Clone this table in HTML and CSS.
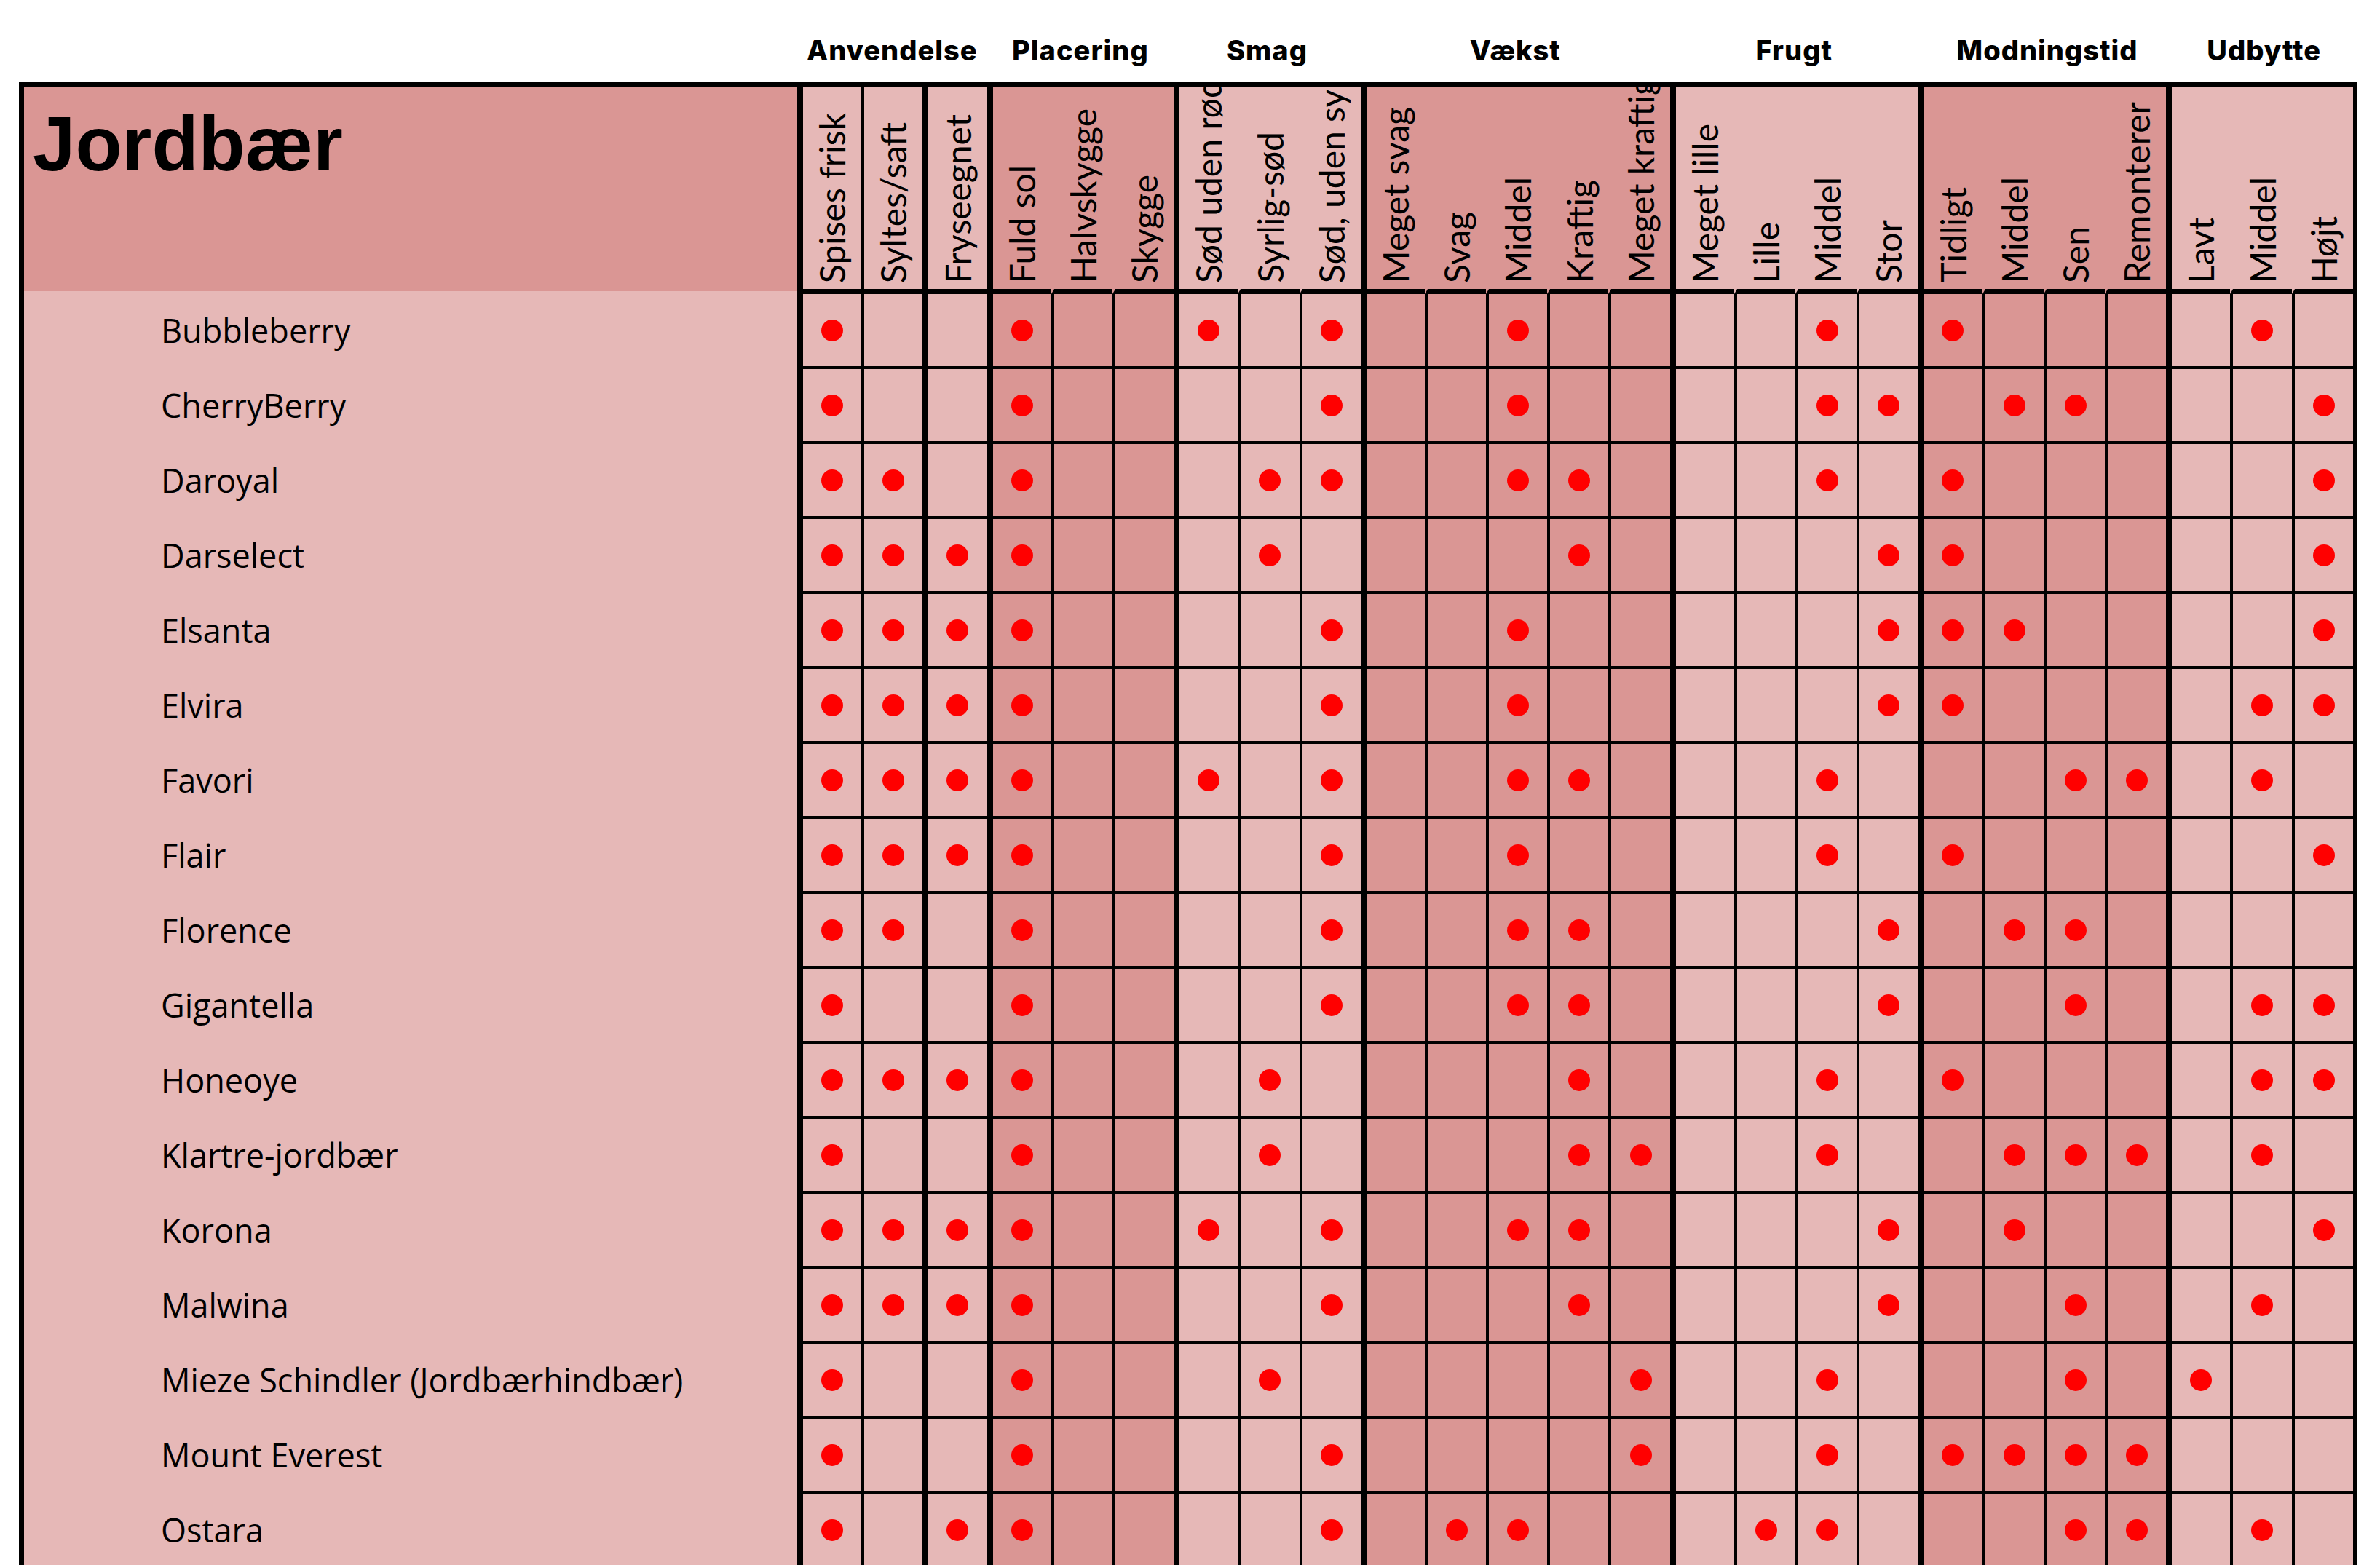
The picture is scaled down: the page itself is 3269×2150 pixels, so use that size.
FILE: index.html
```html
<!DOCTYPE html>
<html lang="da">
<head>
<meta charset="utf-8">
<title>Jordbær</title>
<link rel="stylesheet" href="styles.css">
</head>
<body>
<div class="page">
  <div class="groups">
    <div class="gspacer"></div>
    <div class="g g3a">Anvendelse</div>
    <div class="g g3">Placering</div>
    <div class="g g3">Smag</div>
    <div class="g g5">Vækst</div>
    <div class="g g4">Frugt</div>
    <div class="g g4 gm">Modningstid</div>
    <div class="g g3 gu">Udbytte</div>
  </div>
  <div class="sheet">
    <div class="hrow">
      <div class="title">Jordbær</div>
      <span><em>Spises frisk</em></span>
      <span><em>Syltes/saft</em></span>
      <span><em>Fryseegnet</em></span>
      <span><em>Fuld sol</em></span>
      <span><em>Halvskygge</em></span>
      <span><em>Skygge</em></span>
      <span><em>Sød uden rødt</em></span>
      <span><em>Syrlig-sød</em></span>
      <span><em>Sød, uden syre</em></span>
      <span><em>Meget svag</em></span>
      <span><em>Svag</em></span>
      <span><em>Middel</em></span>
      <span><em>Kraftig</em></span>
      <span><em>Meget kraftig</em></span>
      <span><em>Meget lille</em></span>
      <span><em>Lille</em></span>
      <span><em>Middel</em></span>
      <span><em>Stor</em></span>
      <span><em>Tidligt</em></span>
      <span><em>Middel</em></span>
      <span><em>Sen</em></span>
      <span><em>Remonterer</em></span>
      <span><em>Lavt</em></span>
      <span><em>Middel</em></span>
      <span><em>Højt</em></span>
    </div>
    <div class="row"><div class="name">Bubbleberry</div><span class="d"></span><span></span><span></span><span class="d"></span><span></span><span></span><span class="d"></span><span></span><span class="d"></span><span></span><span></span><span class="d"></span><span></span><span></span><span></span><span></span><span class="d"></span><span></span><span class="d"></span><span></span><span></span><span></span><span></span><span class="d"></span><span></span></div>
    <div class="row"><div class="name">CherryBerry</div><span class="d"></span><span></span><span></span><span class="d"></span><span></span><span></span><span></span><span></span><span class="d"></span><span></span><span></span><span class="d"></span><span></span><span></span><span></span><span></span><span class="d"></span><span class="d"></span><span></span><span class="d"></span><span class="d"></span><span></span><span></span><span></span><span class="d"></span></div>
    <div class="row"><div class="name">Daroyal</div><span class="d"></span><span class="d"></span><span></span><span class="d"></span><span></span><span></span><span></span><span class="d"></span><span class="d"></span><span></span><span></span><span class="d"></span><span class="d"></span><span></span><span></span><span></span><span class="d"></span><span></span><span class="d"></span><span></span><span></span><span></span><span></span><span></span><span class="d"></span></div>
    <div class="row"><div class="name">Darselect</div><span class="d"></span><span class="d"></span><span class="d"></span><span class="d"></span><span></span><span></span><span></span><span class="d"></span><span></span><span></span><span></span><span></span><span class="d"></span><span></span><span></span><span></span><span></span><span class="d"></span><span class="d"></span><span></span><span></span><span></span><span></span><span></span><span class="d"></span></div>
    <div class="row"><div class="name">Elsanta</div><span class="d"></span><span class="d"></span><span class="d"></span><span class="d"></span><span></span><span></span><span></span><span></span><span class="d"></span><span></span><span></span><span class="d"></span><span></span><span></span><span></span><span></span><span></span><span class="d"></span><span class="d"></span><span class="d"></span><span></span><span></span><span></span><span></span><span class="d"></span></div>
    <div class="row"><div class="name">Elvira</div><span class="d"></span><span class="d"></span><span class="d"></span><span class="d"></span><span></span><span></span><span></span><span></span><span class="d"></span><span></span><span></span><span class="d"></span><span></span><span></span><span></span><span></span><span></span><span class="d"></span><span class="d"></span><span></span><span></span><span></span><span></span><span class="d"></span><span class="d"></span></div>
    <div class="row"><div class="name">Favori</div><span class="d"></span><span class="d"></span><span class="d"></span><span class="d"></span><span></span><span></span><span class="d"></span><span></span><span class="d"></span><span></span><span></span><span class="d"></span><span class="d"></span><span></span><span></span><span></span><span class="d"></span><span></span><span></span><span></span><span class="d"></span><span class="d"></span><span></span><span class="d"></span><span></span></div>
    <div class="row"><div class="name">Flair</div><span class="d"></span><span class="d"></span><span class="d"></span><span class="d"></span><span></span><span></span><span></span><span></span><span class="d"></span><span></span><span></span><span class="d"></span><span></span><span></span><span></span><span></span><span class="d"></span><span></span><span class="d"></span><span></span><span></span><span></span><span></span><span></span><span class="d"></span></div>
    <div class="row"><div class="name">Florence</div><span class="d"></span><span class="d"></span><span></span><span class="d"></span><span></span><span></span><span></span><span></span><span class="d"></span><span></span><span></span><span class="d"></span><span class="d"></span><span></span><span></span><span></span><span></span><span class="d"></span><span></span><span class="d"></span><span class="d"></span><span></span><span></span><span></span><span></span></div>
    <div class="row"><div class="name">Gigantella</div><span class="d"></span><span></span><span></span><span class="d"></span><span></span><span></span><span></span><span></span><span class="d"></span><span></span><span></span><span class="d"></span><span class="d"></span><span></span><span></span><span></span><span></span><span class="d"></span><span></span><span></span><span class="d"></span><span></span><span></span><span class="d"></span><span class="d"></span></div>
    <div class="row"><div class="name">Honeoye</div><span class="d"></span><span class="d"></span><span class="d"></span><span class="d"></span><span></span><span></span><span></span><span class="d"></span><span></span><span></span><span></span><span></span><span class="d"></span><span></span><span></span><span></span><span class="d"></span><span></span><span class="d"></span><span></span><span></span><span></span><span></span><span class="d"></span><span class="d"></span></div>
    <div class="row"><div class="name">Klartre-jordbær</div><span class="d"></span><span></span><span></span><span class="d"></span><span></span><span></span><span></span><span class="d"></span><span></span><span></span><span></span><span></span><span class="d"></span><span class="d"></span><span></span><span></span><span class="d"></span><span></span><span></span><span class="d"></span><span class="d"></span><span class="d"></span><span></span><span class="d"></span><span></span></div>
    <div class="row"><div class="name">Korona</div><span class="d"></span><span class="d"></span><span class="d"></span><span class="d"></span><span></span><span></span><span class="d"></span><span></span><span class="d"></span><span></span><span></span><span class="d"></span><span class="d"></span><span></span><span></span><span></span><span></span><span class="d"></span><span></span><span class="d"></span><span></span><span></span><span></span><span></span><span class="d"></span></div>
    <div class="row"><div class="name">Malwina</div><span class="d"></span><span class="d"></span><span class="d"></span><span class="d"></span><span></span><span></span><span></span><span></span><span class="d"></span><span></span><span></span><span></span><span class="d"></span><span></span><span></span><span></span><span></span><span class="d"></span><span></span><span></span><span class="d"></span><span></span><span></span><span class="d"></span><span></span></div>
    <div class="row"><div class="name">Mieze Schindler (Jordbærhindbær)</div><span class="d"></span><span></span><span></span><span class="d"></span><span></span><span></span><span></span><span class="d"></span><span></span><span></span><span></span><span></span><span></span><span class="d"></span><span></span><span></span><span class="d"></span><span></span><span></span><span></span><span class="d"></span><span></span><span class="d"></span><span></span><span></span></div>
    <div class="row"><div class="name">Mount Everest</div><span class="d"></span><span></span><span></span><span class="d"></span><span></span><span></span><span></span><span></span><span class="d"></span><span></span><span></span><span></span><span></span><span class="d"></span><span></span><span></span><span class="d"></span><span></span><span class="d"></span><span class="d"></span><span class="d"></span><span class="d"></span><span></span><span></span><span></span></div>
    <div class="row"><div class="name">Ostara</div><span class="d"></span><span></span><span class="d"></span><span class="d"></span><span></span><span></span><span></span><span></span><span class="d"></span><span></span><span class="d"></span><span class="d"></span><span></span><span></span><span></span><span class="d"></span><span class="d"></span><span></span><span></span><span></span><span class="d"></span><span class="d"></span><span></span><span class="d"></span><span></span></div>
  </div>
</div>
</body>
</html>
```
FILE: styles.css
```css
html, body {
  margin: 0;
  padding: 0;
  background: #ffffff;
}

.page {
  padding-left: 26px;
  width: 3243px;
}

/* group labels above the sheet */
.groups {
  display: flex;
  height: 112px;
  box-sizing: border-box;
  padding-top: 46px;
}
.gspacer {
  width: 1069px;
  flex: none;
}
.g {
  flex: none;
  box-sizing: border-box;
  text-align: center;
  font-family: Inter, "Liberation Sans", sans-serif;
  font-weight: 800;
  font-size: 38px;
  line-height: 46px;
  letter-spacing: 1px;
  color: #000;
}
.g3a { width: 260.6px; }
.g3 { width: 256.6px; }
.g4 { width: 340.8px; }
.g5 { width: 425px; }
.gm { padding-left: 14px; }
.gu { padding-left: 12px; }

/* the sheet */
.sheet {
  display: inline-block;
  border-top: 8px solid #000;
  border-left: 7px solid #000;
  border-right: 6px solid #000;
}

.hrow, .row {
  display: flex;
}

.title {
  flex: none;
  width: 1062px;
  height: 284px;
  box-sizing: border-box;
  padding: 25px 12px 0;
  background: #da9694;
  border-bottom: 4px solid #e6b8b7;
  font-family: "Liberation Sans", Arial, sans-serif;
  font-weight: 700;
  font-size: 105px;
  line-height: 1;
  color: #000;
}

.name {
  flex: none;
  width: 1062px;
  box-sizing: border-box;
  padding-left: 188px;
  padding-bottom: 4px;
  background: #e6b8b7;
  display: flex;
  align-items: center;
  font-family: "Open Sans", "Noto Sans", sans-serif;
  font-size: 45px;
  color: #000;
  white-space: nowrap;
}

.row {
  height: 103px;
}

/* cells (header + body) */
.hrow > span,
.row > span {
  flex: none;
  width: 80.2px;
  background: #e6b8b7;
  border-left: 4px solid #000;
}

.row > span {
  border-bottom: 4px solid #000;
  display: flex;
  align-items: center;
  justify-content: center;
}

.hrow > span {
  height: 277px;
  border-bottom: 7px solid #000;
  border-left-color: transparent;
  display: flex;
  flex-direction: column;
  justify-content: flex-end;
  align-items: center;
  overflow: hidden;
}

/* thick group separators */
.hrow > span:nth-child(2), .row > span:nth-child(2),
.hrow > span:nth-child(4), .row > span:nth-child(4),
.hrow > span:nth-child(5), .row > span:nth-child(5),
.hrow > span:nth-child(8), .row > span:nth-child(8),
.hrow > span:nth-child(11), .row > span:nth-child(11),
.hrow > span:nth-child(16), .row > span:nth-child(16),
.hrow > span:nth-child(20), .row > span:nth-child(20),
.hrow > span:nth-child(24), .row > span:nth-child(24) {
  border-left-width: 8px;
}

/* visible separators in the header */
.hrow > span:nth-child(2),
.hrow > span:nth-child(3),
.hrow > span:nth-child(4),
.hrow > span:nth-child(5),
.hrow > span:nth-child(8),
.hrow > span:nth-child(11),
.hrow > span:nth-child(16),
.hrow > span:nth-child(20),
.hrow > span:nth-child(24) {
  border-left-color: #000;
}

/* darker groups: Placering, Vækst, Modningstid */
.hrow > span:nth-child(n+5):nth-child(-n+7),
.row > span:nth-child(n+5):nth-child(-n+7),
.hrow > span:nth-child(n+11):nth-child(-n+15),
.row > span:nth-child(n+11):nth-child(-n+15),
.hrow > span:nth-child(n+20):nth-child(-n+23),
.row > span:nth-child(n+20):nth-child(-n+23) {
  background: #da9694;
}

/* vertical labels */
.hrow em {
  flex: none;
  font-style: normal;
  writing-mode: vertical-rl;
  transform: rotate(180deg);
  white-space: nowrap;
  font-family: Lato, "Open Sans", sans-serif;
  font-size: 48px;
  line-height: 1.2;
  color: #000;
  margin-bottom: 8px;
}

/* dots */
.row > span.d::after {
  content: "";
  width: 30px;
  height: 30px;
  border-radius: 50%;
  background: #ff0000;
}
```
